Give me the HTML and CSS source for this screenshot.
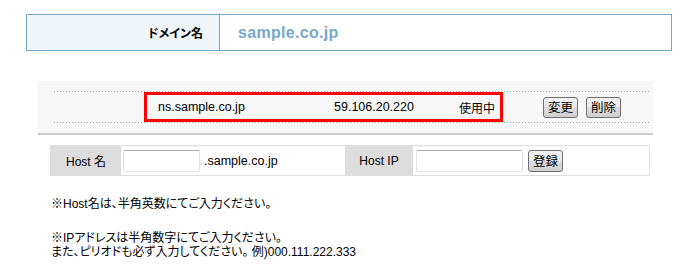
FILE: index.html
```html
<!DOCTYPE html>
<html lang="ja">
<head>
  <meta charset="UTF-8" />
  <title>ネームサーバー設定</title>
  <link rel="stylesheet" href="styles.css">
</head>
<body>
  <div class="page">
    <div class="domain-head">
      <div class="domain-label">ドメイン名</div>
      <div class="domain-value">sample.co.jp</div>
    </div>

    <div class="ns-list">
      <div class="ns-row">
        <div class="ns-highlight">
          <span class="ns-name">ns.sample.co.jp</span>
          <span class="ns-ip">59.106.20.220</span>
          <span class="ns-status">使用中</span>
        </div>
        <button class="btn btn-first">変更</button>
        <button class="btn">削除</button>
      </div>
    </div>

    <div class="host-form">
      <div class="host-label host-label-name">Host 名</div>
      <div class="host-field host-field-name">
        <input type="text" class="host-input host-input-name">
        <span class="host-suffix">.sample.co.jp</span>
      </div>
      <div class="host-label host-label-ip">Host IP</div>
      <div class="host-field">
        <input type="text" class="host-input host-input-ip">
        <button class="btn btn-submit">登録</button>
      </div>
    </div>

    <div class="notes">
      <p class="note-first">※Host名は、半角英数にてご入力ください。</p>
      <p>※IPアドレスは半角数字にてご入力ください。<br>また、ピリオドも必ず入力してください。 例)000.111.222.333</p>
    </div>
  </div>
</body>
</html>
```

FILE: styles.css
```css
html, body {
  margin: 0;
  background-color: #fff;
}

.page {
  padding: 14px 0 0 26px;
  font-family: "Liberation Sans", "Noto Sans CJK JP", sans-serif;
  font-size: 12px;
  color: #000;
  font-feature-settings: "palt";
}

/* Domain header */
.domain-head {
  display: flex;
  width: 646px;
  height: 37px;
  box-sizing: border-box;
  border: 1px solid #74a8c6;
}

.domain-label {
  width: 193px;
  box-sizing: border-box;
  background-color: #f0f5f9;
  border-right: 1px solid #74a8c6;
  display: flex;
  align-items: center;
  justify-content: flex-end;
  padding-right: 16px;
  font-weight: bold;
}

.domain-value {
  display: flex;
  align-items: center;
  padding-left: 18px;
  font-size: 16px;
  font-weight: bold;
  letter-spacing: 0.3px;
  color: #7aa7c7;
}

/* Name server list */
.ns-list {
  margin: 30px 0 0 12px;
  width: 615px;
  box-sizing: border-box;
  padding: 10px 2px 10px 16px;
  background-color: #f7f7f7;
  border-bottom: 2px solid #cccccc;
}

.ns-row {
  display: flex;
  align-items: center;
  height: 32px;
  box-sizing: border-box;
  padding: 1px 0;
  background-image:
    linear-gradient(to right, #aaa 1px, transparent 1px),
    linear-gradient(to right, #aaa 1px, transparent 1px);
  background-size: 3px 1px, 3px 1px;
  background-position: 0 0, 0 100%;
  background-repeat: repeat-x, repeat-x;
}

.ns-highlight {
  margin-left: 90px;
  width: 359px;
  height: 30px;
  box-sizing: border-box;
  border: 3px solid #ff0000;
  display: flex;
  align-items: center;
  padding: 0 5px 0 11px;
}

.ns-name {
  width: 176px;
  font-size: 12.5px;
}

.ns-ip {
  font-size: 12.5px;
}

.ns-status {
  margin-left: auto;
}

.btn {
  height: 21px;
  padding: 0 4px;
  margin-left: 8px;
  font-family: "Noto Sans CJK JP", sans-serif;
  font-size: 12.5px;
  line-height: 18px;
  color: #000;
  border: 1px solid #707070;
  border-radius: 3px;
  background: linear-gradient(#f2f2f2 0%, #ebebeb 50%, #dddddd 50%, #cfcfcf 100%);
  cursor: pointer;
}

.btn-first {
  margin-left: 40px;
}

/* Host form */
.host-form {
  display: flex;
  margin: 10px 0 0 24px;
  width: 600px;
  height: 31px;
  box-sizing: border-box;
  border: 1px solid #dddddd;
}

.host-label {
  display: flex;
  align-items: center;
  justify-content: center;
  background-color: #dddddd;
}

.host-label-name {
  width: 70px;
}

.host-label-ip {
  width: 68px;
}

.host-field {
  display: flex;
  align-items: center;
  padding-left: 2px;
}

.host-field-name {
  width: 224px;
  box-sizing: border-box;
}

.host-input {
  height: 22px;
  box-sizing: border-box;
  margin: 0;
  border: 1px solid #dfe3e9;
  border-top-color: #abadb3;
  border-radius: 2px;
  background: #fff;
}

.host-input-name {
  width: 77px;
}

.host-input-ip {
  width: 107px;
  margin-left: 1px;
}

.host-suffix {
  margin-left: 4px;
  font-size: 12.5px;
}

.btn-submit {
  margin-left: 5px;
  height: 22px;
}

/* Notes */
.notes {
  margin: 21px 0 0 25px;
  line-height: 14px;
}

.notes p {
  margin: 0;
}

.notes .note-first {
  margin-bottom: 20px;
}
```
